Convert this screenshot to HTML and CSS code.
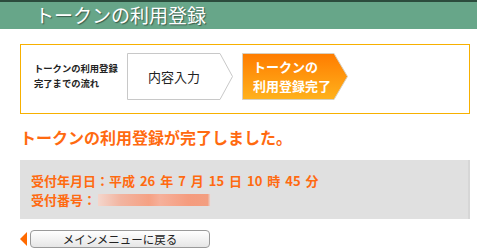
FILE: index.html
```html
<!DOCTYPE html>
<html lang="ja">
  <head>
    <meta charset="UTF-8" />
    <title>トークンの利用登録</title>
    <link rel="stylesheet" href="styles.css">
  </head>
  <body>
    <div class="header">
      <h1>トークンの利用登録</h1>
    </div>

    <div class="content">
      <div class="flow">
        <div class="flow-label">トークンの利用登録<br />完了までの流れ</div>
        <div class="step">
          <svg class="step-bg" width="106" height="47" viewBox="0 0 106 47">
            <polygon points="0.5,0.5 93,0.5 105.5,23.5 93,46.5 0.5,46.5" fill="#fff" stroke="#c8c8c8" />
          </svg>
          <span class="step-text">内容入力</span>
        </div>
        <div class="step current">
          <svg class="step-bg" width="106" height="47" viewBox="0 0 106 47">
            <defs>
              <linearGradient id="og" x1="0" y1="0" x2="0" y2="1">
                <stop offset="0" stop-color="#ff7c00" />
                <stop offset="1" stop-color="#ffb21c" />
              </linearGradient>
            </defs>
            <polygon points="0.5,0.5 92,0.5 105.5,23.5 92,46.5 0.5,46.5" fill="url(#og)" stroke="#d8d0c0" />
          </svg>
          <span class="step-text">トークンの<br />利用登録完了</span>
        </div>
      </div>

      <h2 class="done">トークンの利用登録が完了しました。</h2>

      <div class="receipt">
        <p>受付年月日：平成 26 年 7 月 15 日 10 時 45 分</p>
        <p>受付番号：<span class="masked"></span></p>
      </div>

      <div class="back">
        <span class="back-arrow"></span>
        <button type="button" class="back-btn">メインメニューに戻る</button>
      </div>
    </div>
  </body>
</html>
```

FILE: styles.css
```css
body {
  margin: 0;
  font-family: "Noto Sans CJK JP", "Liberation Sans", sans-serif;
  background-color: white;
  color: #222;
}

.header {
  height: 27px;
  background-color: #67a689;
  border-top: 2px solid #2c4c3d;
}
.header h1 {
  margin: 0;
  padding-left: 35px;
  font-size: 19px;
  font-weight: normal;
  line-height: 26px;
  color: white;
  text-shadow: 1px 1px 1px rgba(0, 0, 0, 0.45);
}

.content {
  padding: 0 7px 0 20px;
}

.flow {
  margin-top: 15px;
  height: 68px;
  border: 1px solid #f7b000;
  display: flex;
  align-items: center;
}

.flow-label {
  width: 93px;
  padding-left: 13px;
  font-size: 9.3px;
  font-weight: bold;
  line-height: 15px;
  color: #222;
  margin-top: -6px;
}

.step {
  position: relative;
  width: 106px;
  height: 47px;
  display: flex;
  align-items: center;
  margin-top: -6px;
}
.step + .step {
  margin-left: 9px;
}
.step-bg {
  position: absolute;
  left: 0;
  top: 0;
}
.step-text {
  position: relative;
  width: 94px;
  text-align: center;
  font-size: 13px;
  line-height: 19px;
}
.step.current .step-text {
  text-align: left;
  padding-left: 11px;
  color: white;
  font-weight: bold;
}

.done {
  margin: 9px 0 0;
  font-size: 16px;
  line-height: 28px;
  color: #ff6a10;
}

.receipt {
  margin-top: 9px;
  height: 59px;
  padding: 11px 0 0 11px;
  box-sizing: border-box;
  background-color: #e0e0e0;
  border-right: 2px solid #d6d6d6;
}
.receipt p {
  margin: 0;
  font-size: 13px;
  font-weight: bold;
  line-height: 19px;
  word-spacing: 2px;
  color: #ff6a10;
}
.masked {
  display: inline-block;
  width: 113px;
  height: 12px;
  margin-left: 2px;
  vertical-align: -1px;
  background: linear-gradient(to right, #f4d6cc 0%, #f2b4a0 20%, #f5a184 45%, #f6b09a 55%, #f59c7e 80%, #f39e80 97%, #e4e8ec 100%);
}

.back {
  margin-top: 11px;
  display: flex;
  align-items: center;
}
.back-arrow {
  width: 0;
  height: 0;
  border-top: 7px solid transparent;
  border-bottom: 7px solid transparent;
  border-right: 7px solid #ff6a00;
  margin-right: 3px;
}
.back-btn {
  width: 180px;
  height: 18px;
  padding: 0;
  border: 1px solid #9a9a9a;
  border-radius: 4px;
  background: linear-gradient(#ffffff, #e6e6e6);
  font-family: "Noto Sans CJK JP", sans-serif;
  font-size: 11.5px;
  line-height: 16px;
  color: #222;
}
```
